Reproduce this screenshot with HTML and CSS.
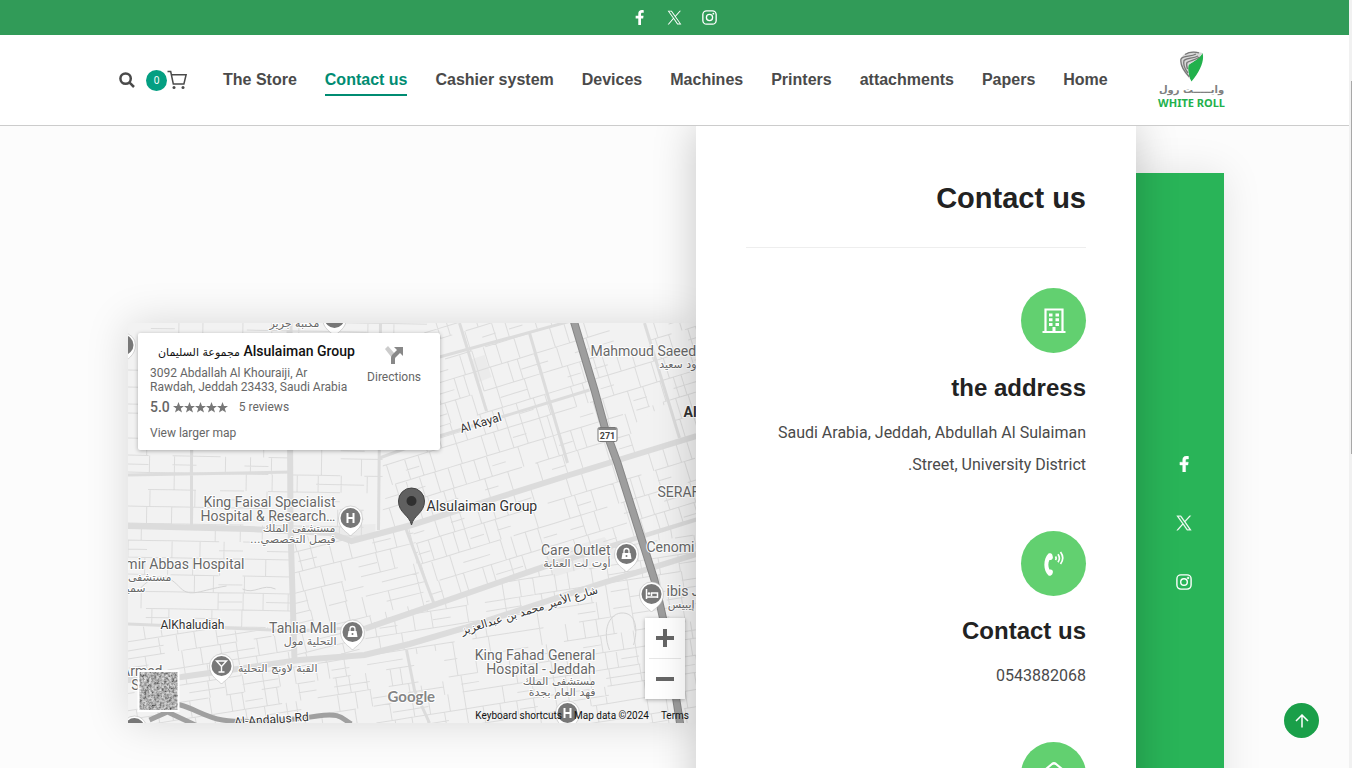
FILE: index.html
```html
<!DOCTYPE html>
<html lang="en">
<head>
<meta charset="utf-8">
<title>Contact us - White Roll</title>
<link rel="stylesheet" href="styles.css">
</head>
<body>
<svg class="sprite" aria-hidden="true">
  <symbol id="i-fb" viewBox="0 0 16 16"><path d="M9.6 16V9h2.3l.4-2.800H9.600V4.500c0-.8.300-1.500 1.500-1.500h1.400V.3C12.200.2 11.400 0 10.500 0 8.200 0 6.700 1.400 6.700 3.900v2.300H3.900V9h2.800v7z"/></symbol>
  <symbol id="i-x" viewBox="0 0 24 24"><path d="M14.100 10.300 22.300 1h-2l-7.100 8L7.600 1H1l8.600 12.200L1 23h2l7.500-8.600L16.400 23H23zM11.400 13.300l-.9-1.200L3.600 2.400h3l5.600 7.800.9 1.200 7.200 10.200h-3z"/></symbol>
  <symbol id="i-ig" viewBox="0 0 16 16"><g fill="none" stroke="currentColor" stroke-width="1.400"><rect x=".9" y=".9" width="14.200" height="14.200" rx="4"/><circle cx="8" cy="8" r="3.300"/></g><circle cx="12.100" cy="3.900" r="1"/></symbol>
</svg>

<div class="topbar">
  <a href="#" aria-label="Facebook"><svg><use href="#i-fb"/></svg></a>
  <a href="#" aria-label="X"><svg><use href="#i-x"/></svg></a>
  <a href="#" aria-label="Instagram"><svg><use href="#i-ig"/></svg></a>
</div>

<header class="header">
  <div class="header-inner">
    <div class="tools">
      <button class="search" aria-label="Search"><svg viewBox="0 0 16 16"><circle cx="6.600" cy="6.600" r="5.200"/><path d="M10.600 10.600 15 15"/></svg></button>
      <a class="cart" href="#" aria-label="Cart"><span class="count">0</span><svg viewBox="0 0 20 20"><path d="M.5 1.500h3.200L6.300 14h10.600l2.200-9.300H4.500"/><circle class="dot" cx="7" cy="17.600" r="1.500"/><circle class="dot" cx="16" cy="17.600" r="1.500"/></svg></a>
    </div>
    <nav class="nav">
      <a href="#">The Store</a>
      <a class="active" href="#">Contact us</a>
      <a href="#">Cashier system</a>
      <a href="#">Devices</a>
      <a href="#">Machines</a>
      <a href="#">Printers</a>
      <a href="#">attachments</a>
      <a href="#">Papers</a>
      <a href="#">Home</a>
    </nav>
    <a class="logo" href="#">
      <svg viewBox="0 0 24 31"><path d="M22.500 2c2.200 7-2 18-11 28.500C8.500 25 7.500 19 8.500 14c4-3.500 10-5 14-12z" fill="#22b14c"/><path d="M22.500 2C18 .2 11-.5 5.500 2.500 1 5 0 9 1 14c1 5 5 10 9 14-1.500-5-2.500-10-1.500-14 4-3.500 10-5 14-12z" fill="#d8d8d8"/><g fill="none" stroke="#777" stroke-width="1.300"><path d="M9.500 26C3 19 0 13 1 8c2-3.500 10-2 15-5"/><path d="M8 22C4 17 3 13 4 9.500c3-3 9-1.500 14-4.500"/><path d="M7.500 18c-1-3-1.500-4.500-.5-6.500 3-2.500 8-2 12.500-5.500"/><path d="M5 3.500C9 1 13 .5 19 1.800"/></g></svg>
      <span class="logo-ar" lang="ar">وايـــــت رول</span>
      <span class="logo-en">WHITE ROLL</span>
    </a>
  </div>
</header>

<main class="main">
  <section class="map" aria-label="Map">
    <svg class="map-art" viewBox="128 323 569 400" preserveAspectRatio="xMidYMid slice">
      <defs>
        <clipPath id="c-west"><path d="M128 323h300l-45 127v82l-32 8-58-7v98l-165-7z"/></clipPath>
        <clipPath id="c-east"><path d="M428 323h269v197l-152 45-114 40-19-80-29 5v-80z"/></clipPath>
        <clipPath id="c-mid"><path d="M293 534l58 7 61-16 19 80-66 22v28l-67 5z"/></clipPath>
        <clipPath id="c-south"><path d="M128 626l168 7v27l70-5v-30l66-22 113-38 152-45v203H128z"/></clipPath>
        <filter id="sat" x="0" y="0" width="100%" height="100%"><feTurbulence type="fractalNoise" baseFrequency=".4" numOctaves="3" seed="4"/><feColorMatrix values="1.200 0 0 0 0 1.200 0 0 0 0 1.200 0 0 0 0 0 0 0 0 1"/><feComponentTransfer><feFuncR type="linear" slope=".9" intercept="-.12"/><feFuncG type="linear" slope=".9" intercept="-.12"/><feFuncB type="linear" slope=".9" intercept="-.12"/></feComponentTransfer></filter>
        <g id="pin"><path d="M0 18c-2-3-12-7-12-18a12 12 0 0 1 24 0c0 11-10 15-12 18z" fill="#fff" stroke="#bbb" stroke-width=".6"/><circle r="10" fill="#777"/></g>
        <g id="bag" fill="#fff"><path d="M-4-1h8l1 6H-5z"/><path d="M-2.500-1v-2a2.500 2.500 0 0 1 5 0v2" fill="none" stroke="#fff" stroke-width="1.300"/><circle cy="2" r="1" fill="#777"/></g>
      </defs>
      <path d="M128 323h569v400H128z" fill="#f2f2f2"/>
      <g fill="#ebebeb"><path d="M296 527l80-3v8l-26 9zM470 360l15-5 7 22-15 6zM545 555l60-18 15 20-66 20z"/></g>
      <g id="streets" class="streets"></g>
      <g class="plot"><path d="M607 323h38l8 22-32 13zM633 425l35-22 15 38-40 14zM412 655l30-5 8 30-30 6z"/></g>
      <g class="road">
        <path d="M128 526l122 3 80 4 22 8 60-16 158-50 127-39"/><path d="M290 323l1 205 4 132"/><path d="M128 680l54-3 118-17 65-5 45-11 55-16 135-44 97-30"/>
      </g>
      <g class="road thin">
        <path d="M381 323l-2 207M192 400v126M128 624l168 7 70-4 64-22 115-40 152-46M366 630l64-22 115-40 152-48M440 436l-60 22M440 436l150-46M460 323l27 88M440 357l135-37M530 333l38 130M645 323l35 115M407 650l8 40 15 33M128 475l165-3M405 525l30 80"/>
      </g>
      <path class="minor" d="M141 588c20-20 30-10 40 0s20 2 46-2M243 589c12 6 20-6 33 0M610 650c-8-20 0-38 14-37s14 20 10 32"/>
      <path class="highway" d="M574 320l21 70 11 40 12 33 37 117 10 45 16 101"/>
      <path class="highway small" d="M158 704c30-4 40 12 65 16s70 0 95-4 25 4 34 8M150 720l18-8 30 14"/>
      <path class="highway-core" d="M574 320l21 70 11 40 12 33 37 117 10 45 16 101"/>

      <g class="poi" text-anchor="end">
        <text x="320" y="327" class="ar">مكتبة جرير</text>
        <text x="336" y="507">King Faisal Specialist</text><text x="336" y="521">Hospital &amp; Research…</text>
        <text x="336" y="532" class="ar">مستشفى الملك</text><text x="336" y="543" class="ar">فيصل التخصصي...</text>
        <text x="245" y="569">mir Abbas Hospital</text>
        <text x="172" y="581" class="ar">مستشفى</text><text x="146" y="592" class="ar">سمير</text>
        <text x="337" y="633">Tahlia Mall</text><text x="337" y="645" class="ar">التحلية مول</text>
        <text x="318" y="672" class="ar">القبة لاونج التحلية</text>
        <text x="611" y="555">Care Outlet</text><text x="611" y="567" class="ar">أوت لت العناية</text>
        <text x="596" y="660">King Fahad General</text><text x="596" y="674">Hospital - Jeddah</text>
        <text x="596" y="685" class="ar">مستشفى الملك</text><text x="596" y="696" class="ar">فهد العام بجدة</text>
        <text x="163" y="676">Armed</text><text x="148" y="690">Sp</text>
        <text x="697" y="368" class="ar">ود سعيد</text><text x="695" y="608" class="ar">إيبيس</text>
      </g>
      <g class="poi">
        <text x="591" y="356">Mahmoud Saeed</text><text x="658" y="497">SERAFI</text><text x="647" y="552">Cenomi</text><text x="667" y="596">ibis J</text>
        <text x="684" y="417" class="strong">Al</text><text x="427" y="511" class="place">Alsulaiman Group</text>
      </g>
      <g class="street-name">
        <text transform="translate(462 433) rotate(-17)">Al Kayal</text>
        <text x="161" y="629">AlKhaludiah</text><text transform="translate(235 726) rotate(-4)">Al-Andalus Rd</text>
        <text transform="translate(599 593) rotate(-17)" class="ar">شارع الأمير محمد بن عبدالعزيز</text>
      </g>

      <g><use href="#pin" x="335" y="318"/><use href="#pin" x="124" y="345"/><use href="#pin" x="351" y="518"/><use href="#pin" x="353" y="632"/><use href="#pin" x="222" y="666"/><use href="#pin" x="627" y="554"/><use href="#pin" x="652" y="594"/><use href="#pin" x="568" y="713"/><use href="#pin" x="135" y="728"/></g>
      <g fill="none" stroke="#fff" stroke-width="2"><path d="M348 513v10M354 513v10M348 518h6M565 708v10M571 708v10M565 713h6"/><path stroke-width="1.400" d="M217 661h10l-5 5.500zM222 666v6M219 672h6"/><path stroke-width="1.500" d="M647 589v10M647 597h11M658 598v-5h-6v3"/></g>
      <circle cx="649.500" cy="593.500" r="1.300" fill="#fff"/>
      <use href="#bag" x="353" y="632"/><use href="#bag" x="627" y="554"/>
      <path d="M412 525c-2-10-13-12-13-24a13 13 0 0 1 26 0c0 12-11 14-13 24z" fill="#606060" stroke="#444"/><circle cx="412" cy="501" r="5" fill="#303030"/>
      <g><rect x="598.500" y="427.500" width="19" height="14" rx="1.500" fill="#fff" stroke="#777"/><path d="M599 428h18v2h-18z" fill="#888"/><text x="608" y="439" text-anchor="middle" class="shield">271</text></g>
      <text x="388" y="702" class="google">Google</text>
      <rect x="139" y="671" width="40" height="40" filter="url(#sat)"/><rect x="139" y="671" width="40" height="40" fill="none" stroke="#fff" stroke-width="2"/>
    </svg>

    <div class="place-card">
      <div class="place-info">
        <strong><span lang="ar">مجموعة السليمان</span> Alsulaiman Group</strong>
        <p>3092 Abdallah Al Khouraiji, Ar Rawdah, Jeddah 23433, Saudi Arabia</p>
        <div class="rating"><b>5.0</b>
          <svg viewBox="0 0 55 11" role="img" aria-label="5 stars"><defs><path id="star" d="M5.500 0l1.500 3.900 4 .1-3.200 2.500L9 10.500 5.500 8.200 2 10.500l1.200-4L0 4l4-.1z"/></defs><use href="#star"/><use href="#star" x="11"/><use href="#star" x="22"/><use href="#star" x="33"/><use href="#star" x="44"/></svg>
          <a href="#">5 reviews</a></div>
        <a href="#">View larger map</a>
      </div>
      <a class="directions" href="#"><svg viewBox="0 0 20 20"><path d="M1 4l3-3 7 8-3 4z" fill="#ccc"/><path d="M7 19v-6c0-2 1-3 2-4l4-4-3-3h9v9l-3-3-4 4c-1 1-1 1-1 3v4z" fill="#888"/></svg>Directions</a>
    </div>

    <div class="zoom-ctl">
      <button aria-label="Zoom in"><svg viewBox="0 0 18 18"><path d="M9 0v18M0 9h18"/></svg></button>
      <button aria-label="Zoom out"><svg viewBox="0 0 18 18"><path d="M0 9h18"/></svg></button>
    </div>
    <div class="credits"><button>Keyboard shortcuts</button><span class="data">Map data ©2024</span><a href="#">Terms</a></div>
  </section>

  <section class="contact">
    <h1>Contact us</h1>
    <div class="block">
      <span class="disc"><svg viewBox="0 0 24 26"><path d="M3.500 24V1.500h17V24" fill="none" stroke="#fff" stroke-width="2.200"/><path d="M.5 23h10v-4h3v4h10v2H.5zM7 5.500h3.500v3H7zM13.500 5.500H17v3h-3.500zM7 10.200h3.500v3H7zM13.500 10.200H17v3h-3.500zM7 15h3.500v3H7zM13.500 15H17v3h-3.500z" fill="#fff"/></svg></span>
      <h2>the address</h2>
      <p>Saudi Arabia, Jeddah, Abdullah Al Sulaiman .Street, University District</p>
    </div>
    <div class="block">
      <span class="disc"><svg viewBox="0 0 24 26"><path d="M6.500 2.500c1.500-.5 3 0 3.800 1.200l.6 2.600c0 1.500-.9 2.500-2.300 2.700H7.400c-1.400 3-1.400 6.300 0 9.500h1.200c1.400.2 2.500 1 2.300 2.700l-.6 2c-.8 1.300-2.500 1.900-3.800 1.200C1 19.500 1 8 6.500 2.500z" fill="#fff"/><path d="M13.500 5.500q1.200 1.700 0 3.500M16 3.200q2.800 4 0 8M18.500 1q4.500 6 0 12" fill="none" stroke="#fff" stroke-width="1.700"/></svg></span>
      <h2>Contact us</h2>
      <p>0543882068</p>
    </div>
    <div class="block">
      <span class="disc"><svg viewBox="0 0 24 26"><path d="M1 25V9.500L10 2q2-1.500 4 0l9 7.500V25z" fill="none" stroke="#fff" stroke-width="2.200"/></svg></span>
    </div>
  </section>

  <aside class="social">
    <a href="#" aria-label="Facebook"><svg><use href="#i-fb"/></svg></a>
    <a href="#" aria-label="X"><svg><use href="#i-x"/></svg></a>
    <a href="#" aria-label="Instagram"><svg><use href="#i-ig"/></svg></a>
  </aside>
</main>

<a class="to-top" href="#" aria-label="Back to top"><svg viewBox="0 0 14 14"><path d="M7 13.500V1M1 7l6-6 6 6"/></svg></a>
<div class="scroll-track"><div class="scroll-thumb"></div></div>
<script src="streets.js"></script>
</body>
</html>
```
FILE: styles.css
```css
* { box-sizing: border-box; }
body { margin: 0; height: 100vh; overflow: hidden; display: flex; flex-direction: column; background: #fcfcfc; color: #4a4a4a; font: 16px/32px Roboto, sans-serif; }
a { color: inherit; text-decoration: none; }
button { border: 0; padding: 0; background: none; color: inherit; font: inherit; }
svg { display: block; fill: currentColor; }
.sprite { position: absolute; width: 0; height: 0; }

.topbar { flex: none; height: 35px; padding-right: 3px; display: flex; justify-content: center; align-items: center; gap: 20px; background: #319b58; color: #fff; }
.topbar svg { width: 15px; height: 15px; }

.header { flex: none; height: 91px; background: #fff; border-bottom: 1px solid #ccc; position: relative; z-index: 3; }
.header-inner { max-width: 1114px; height: 100%; margin: 0 auto; padding-right: 8px; display: flex; align-items: center; }
.tools { display: flex; align-items: center; gap: 11px; margin-right: 36px; }
.search svg { width: 16px; height: 16px; fill: none; stroke: #4a4a4a; stroke-width: 2.500; }
.cart { display: flex; align-items: center; }
.cart svg { width: 20px; height: 20px; fill: none; stroke: #4a4a4a; stroke-width: 1.500; }
.cart .dot { fill: #4a4a4a; stroke: none; }
.count { width: 21px; height: 21px; border-radius: 50%; background: #049f82; color: #fff; font: 10px/21px "Noto Sans", sans-serif; text-align: center; }
.nav { display: flex; gap: 28px; font: bold 16px/28px "Liberation Sans", sans-serif; }
.nav a { padding: 2px 0 1px; border-bottom: 2px solid transparent; }
.nav .active { padding-bottom: 0; align-self: flex-start; color: #008c72; border-color: #008c72; }
.logo { margin-left: auto; display: flex; flex-direction: column; align-items: center; }
.logo svg { width: 24px; height: 31px; }
.logo-ar { font: bold 10px/15px "DejaVu Sans", sans-serif; color: #808080; white-space: nowrap; }
.logo-en { font: bold 11px/12px "Noto Sans", sans-serif; color: #22b14c; white-space: nowrap; }

.main { flex: 1; min-height: 0; overflow-y: clip; width: 100%; max-width: 1096px; margin: 0 auto; display: grid; grid-template-columns: 1fr 440px 88px; align-items: start; }
.map { position: relative; height: 400px; margin-top: 197px; box-shadow: 0 0 40px rgba(0,0,0,.15); font-size: 12px; line-height: 14px; color: #666; }
.map-art { width: 100%; height: 100%; }
.streets { fill: none; stroke: #dcdcdc; stroke-width: 1; }
.minor { fill: none; stroke: #d4d4d4; }
.plot { fill: #f2f2f2; }
.road { fill: none; stroke: #dcdcdc; stroke-width: 6; }
.road.thin { stroke-width: 3; }
.highway { fill: none; stroke: #878787; stroke-width: 8; }
.highway.small { stroke: #a0a0a0; stroke-width: 5; }
.highway-core { fill: none; stroke: #9e9e9e; stroke-width: 6; }
.poi, .street-name { font: 14px Roboto, sans-serif; fill: #686868; stroke: #fff; stroke-width: 2px; paint-order: stroke; stroke-linejoin: round; }
.poi .ar, .street-name .ar { font: 11px "DejaVu Sans", sans-serif; direction: rtl; text-anchor: start; }
.poi .place { fill: #333; }
.poi .strong { fill: #333; font-weight: bold; }
.street-name { font-size: 12px; fill: #333; }
.shield { font: bold 9px Roboto, sans-serif; fill: #444; }
.google { font: bold 15px Lato, sans-serif; fill: #858585; stroke: #fff; stroke-width: 2px; paint-order: stroke; }

.place-card { position: absolute; top: 10px; left: 10px; width: 302px; height: 117px; padding: 9px 19px 9px 12px; display: flex; justify-content: space-between; background: #fff; border-radius: 2px; box-shadow: 0 1px 4px rgba(0,0,0,.3); }
.place-info { width: 200px; }
.place-info strong { display: block; margin-left: 8px; color: #111; font-size: 14px; font-weight: 500; line-height: 18px; white-space: nowrap; }
.place-info strong span { font: 11px "DejaVu Sans", sans-serif; }
.place-info p { margin: 6px 0; }
.rating { display: flex; align-items: center; gap: 3px; margin-bottom: 12px; }
.rating b { font-size: 14px; font-weight: 500; }
.rating svg { width: 55px; height: 11px; fill: #777; }
.rating a { margin-left: 8px; }
.directions { display: flex; flex-direction: column; align-items: center; gap: 5px; padding-top: 3px; }
.directions svg { width: 20px; height: 20px; }
.zoom-ctl { position: absolute; right: 11px; bottom: 24px; width: 40px; padding: 0 4px; background: #fff; box-shadow: 0 1px 4px rgba(0,0,0,.3); }
.zoom-ctl button { display: grid; place-items: center; width: 100%; height: 40px; }
.zoom-ctl button + button { height: 41px; border-top: 1px solid #e6e6e6; }
.zoom-ctl svg { width: 18px; height: 18px; stroke: #666; stroke-width: 4; }
.credits { position: absolute; right: 7px; bottom: 0; display: flex; gap: 12px; font-size: 10px; line-height: 14px; color: #111; }

.contact { position: relative; z-index: 2; align-self: stretch; padding: 52px 50px; background: #fff; box-shadow: 0 0 40px rgba(0,0,0,.22); text-align: right; }
h1, h2 { margin: 0; color: #222; font-family: "Liberation Sans", sans-serif; font-weight: bold; }
h1 { padding-bottom: 29px; border-bottom: 1px solid #eee; margin-bottom: 40px; font-size: 29px; line-height: 40px; }
h2 { margin: 20px 0 14px; font-size: 24px; line-height: 30px; }
.block { margin-bottom: 50px; }
.block p { margin: 0; }
.disc { display: grid; place-items: center; width: 65px; height: 65px; margin-left: auto; border-radius: 50%; background: #62d070; }
.disc svg { width: 24px; height: 26px; }

.social { align-self: stretch; margin-top: 47px; padding: 283px 0 0 7px; display: flex; flex-direction: column; align-items: center; gap: 43px; background: #29b458; color: #fff; box-shadow: 0 0 40px rgba(0,0,0,.1); }
.social svg { width: 16px; height: 16px; stroke: currentColor; stroke-width: .4; }

.to-top { position: fixed; right: 33px; bottom: 30px; z-index: 4; width: 35px; height: 35px; display: grid; place-items: center; border-radius: 50%; background: #1a9f49; }
.to-top svg { width: 14px; height: 14px; fill: none; stroke: #fff; stroke-width: 1.500; }
.scroll-track { position: fixed; z-index: 5; top: 0; right: 0; width: 3px; height: 100%; padding: 81px 0 0 2px; background: #f1f1f1; }
.scroll-thumb { height: 373px; background: #a8a8a8; }
```
FILE: streets.js
```javascript
// Fills each district of the map with a loose grid of side streets.
(function () {
  var seed = 7;
  function rnd() { seed = (seed * 16807) % 2147483647; return seed / 2147483647; }
  function district(clip, angle, w, h, keep) {
    var d = "", x, y;
    for (y = -420; y < 420; y += h) {
      for (x = -480; x < 480; x += w) {
        var jx = Math.round((rnd() - 0.5) * w * 0.5);
        if (rnd() < keep + 0.1) d += "M" + x + " " + y + "h" + w;
        if (rnd() < keep) d += "M" + (x + jx) + " " + y + "v" + h;
        if (rnd() < 0.25) d += "M" + x + " " + (y + Math.round(h / 2)) + "h" + w;
      }
    }
    return '<g clip-path="url(#' + clip + ')"><path transform="translate(412 523) rotate(' + angle + ')" d="' + d + '"/></g>';
  }
  document.getElementById("streets").innerHTML =
    district("c-west", 1, 24, 17, 0.62) +
    district("c-east", -17, 14, 21, 0.8) +
    district("c-mid", -14, 19, 20, 0.7) +
    district("c-south", -9, 18, 17, 0.72);
})();
```
